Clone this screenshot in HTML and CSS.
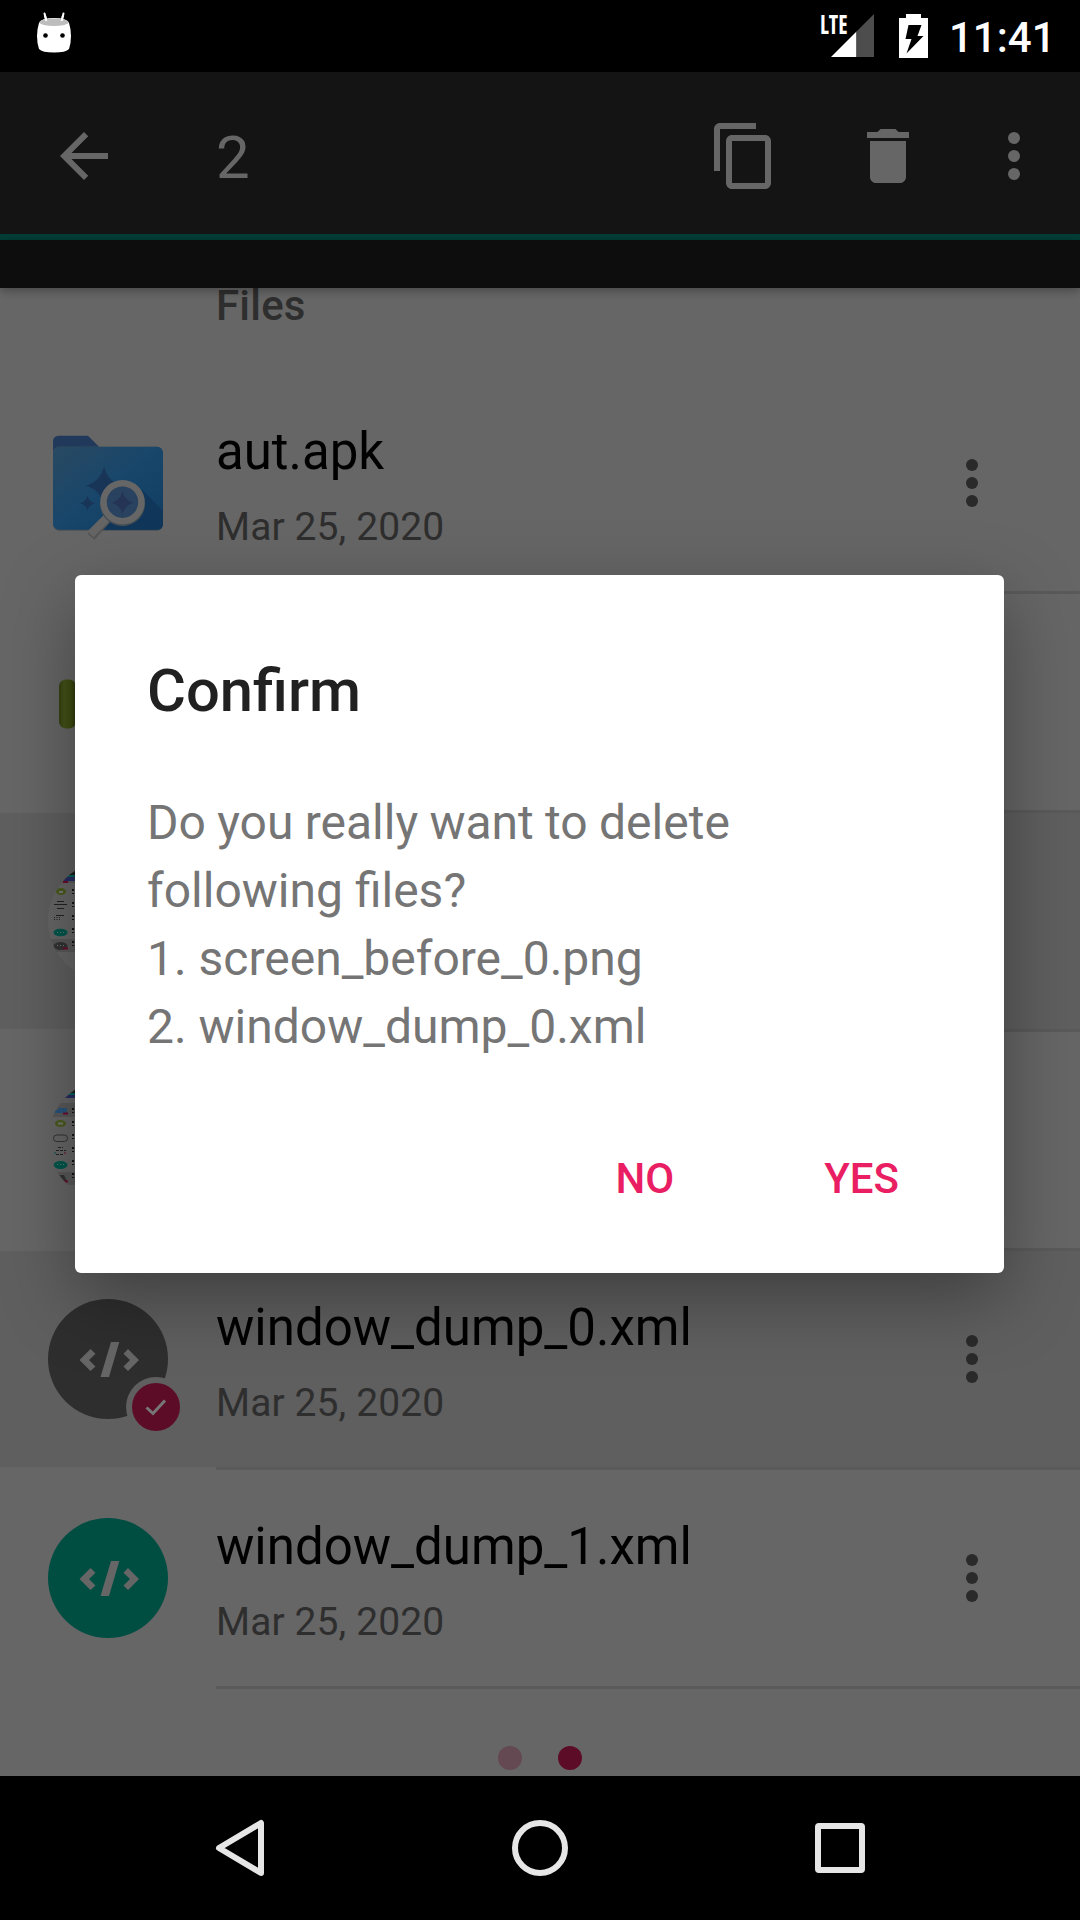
FILE: index.html
```html
<!DOCTYPE html>
<html lang="en">
<head>
<meta charset="utf-8">
<title>Files</title>
<link rel="stylesheet" href="styles.css">
</head>
<body>
<svg class="defs" width="0" height="0">
  <symbol id="more" viewBox="0 0 72 72"><circle cx="36" cy="18" r="6"/><circle cx="36" cy="36" r="6"/><circle cx="36" cy="54" r="6"/></symbol>
  <symbol id="code" viewBox="0 0 120 120"><circle cx="60" cy="60" r="60"/><path fill="#666" d="M42.5 50 47.500 54.700 41 61 47.500 67.500 42.500 72 31.500 61ZM63 43H71.300L61 78H52.500ZM80 50 91 61 80 72 75.500 67.500 82 61 75.500 54.700Z"/></symbol>
</svg>
<div class="phone">
  <header class="status">
    <svg class="status-left" width="34" height="42" viewBox="0 0 34 42"><path d="M7.500 1.500 9.500 9M26.500 1.500 24.500 9" stroke="#fff" stroke-width="2" stroke-linecap="round"/><path d="M2 11Q4 6 17 6T32 11Q34 17 34 24T32 37Q29 40.500 17 40.500T2 37Q0 31 0 24T2 11Z" fill="#fff"/><ellipse cx="17" cy="10.300" rx="14.500" ry="3.700" fill="#bdbdbd"/><circle cx="8.500" cy="23.500" r="2.300"/><circle cx="25.500" cy="23.500" r="2.300"/><path d="M7.800 3 9.400 9M26.200 3 24.600 9" stroke="#fff" stroke-width="2"/></svg>
    <div class="status-right">
      <div class="signal"><span class="lte">LTE</span><svg width="43" height="43" viewBox="0 0 43 43"><path fill="#fff" d="M0 43 25.500 17.500V43Z"/><path fill="#4d4d4d" d="M25.500 17.500 43 0V43H25.500Z"/></svg></div>
      <svg class="battery" width="29" height="44" viewBox="0 0 29 44"><path fill="#fff" d="M7 0H22V4H29V44H0V4H7Z"/><path d="M9.500 11H22.500L18.500 22H24.500L7.500 39.500 12.500 25H6.500Z"/></svg>
      <span class="clock">11:41</span>
    </div>
  </header>
  <div class="toolbar">
    <svg class="back" width="72" height="72" viewBox="0 0 24 24"><path d="M20 11H7.830l5.590-5.590L12 4l-8 8 8 8 1.410-1.410L7.830 13H20v-2z"/></svg>
    <span class="count">2</span>
    <svg class="copy" width="72" height="72" viewBox="0 0 24 24"><path d="M16 1H4c-1.100 0-2 .9-2 2v14h2V3h12V1zm3 4H8c-1.100 0-2 .9-2 2v14c0 1.100.9 2 2 2h11c1.100 0 2-.9 2-2V7c0-1.100-.9-2-2-2zm0 16H8V7h11v14z"/></svg>
    <svg class="trash" width="72" height="72" viewBox="0 0 24 24"><path d="M6 19c0 1.100.9 2 2 2h8c1.100 0 2-.9 2-2V7H6v12zM19 4h-3.500l-1-1h-5l-1 1H5v2h14V4z"/></svg>
    <svg class="menu" width="72" height="72"><use href="#more"/></svg>
  </div>
  <div class="strip"></div>
  <main class="list">
    <div class="section">Files</div>
    <div class="row">
      <svg class="icon" width="120" height="120" viewBox="0 -4.700 120 120">
        <defs><linearGradient id="fold" x1="0" y1="0" x2="1" y2="1"><stop offset="0" stop-color="#294961"/><stop offset=".5" stop-color="#18466b"/><stop offset="1" stop-color="#103c60"/></linearGradient></defs>
        <path fill="#213a5b" d="M5 14Q5 8 11 8H40L52 20V40H5Z"/>
        <rect x="5" y="19" width="110" height="84" rx="6" fill="#4f5355"/><rect x="5" y="19" width="110" height="83" rx="6" fill="url(#fold)"/>
        <path fill="#10365a" d="M94 62 115 83V96Q115 102 109 102H54L62 90Z"/>
        <path fill="#183557" d="M56 39Q60 54 74 58 60 62 56 77 52 62 38 58 52 54 56 39ZM39.500 68Q41 74 47 75.500 41 77 39.500 83 38 77 32 75.500 38 74 39.500 68Z"/>
        <path d="M61 89 43 109" stroke="#555" stroke-width="9"/>
        <path d="M61 88 42.500 106.500" stroke="#656565" stroke-width="8.500"/>
        <circle cx="74.500" cy="76" r="19" fill="#263f5d" stroke="#414c55" stroke-width="7"/>
        <circle cx="74.500" cy="74.500" r="19" fill="#28425f" stroke="#666" stroke-width="6.500"/>
        <path fill="#253455" d="M74.500 64Q77 72.500 85 75 77 77.500 74.500 86 72 77.500 64 75 72 72.500 74.500 64Z"/>
      </svg>
      <div class="label"><b>aut.apk</b><i>Mar 25, 2020</i></div>
      <svg class="more" width="72" height="72"><use href="#more"/></svg>
    </div>
    <div class="row">
      <svg class="icon" width="120" height="120" viewBox="0 0 120 120"><defs><linearGradient id="pill"><stop offset="0" stop-color="#34400f"/><stop offset=".3" stop-color="#455419"/><stop offset=".7" stop-color="#3d4c10"/><stop offset="1" stop-color="#2a360c"/></linearGradient></defs><rect x="11" y="37.500" width="17" height="49" rx="7" fill="url(#pill)"/></svg>
    </div>
    <div class="row selected">
      <svg class="icon" width="120" height="120" viewBox="0 0 120 120">
        <clipPath id="round"><circle cx="60" cy="60" r="60"/></clipPath>
        <g clip-path="url(#round)">
          <rect width="120" height="120" fill="#666"/><path fill="#595959" d="M0 0H60V22H0ZM0 78H60V91H0Z"/>
          <path fill="#1c1c1c" d="M0 0H60V14H0Z"/><path fill="#006055" d="M0 14H60V16H0Z"/><path fill="#262d60" d="M0 16H60V20H0Z"/><path fill="#6d0c30" d="M15 20H20V22H15Z"/>
          <ellipse cx="13" cy="30.500" rx="5" ry="3.500" fill="#4a5a1c"/><path stroke="#777" stroke-width="2" d="M11 31H15"/>
          <rect x="5.500" y="41" width="14" height="6.500" rx="3.200" fill="#666"/><path stroke="#222" d="M9 40.500H16M6 43.500H19M9 47.500H16"/>
          <path stroke="#222" d="M8 54.500H16"/><path stroke="#222" stroke-dasharray="1 1.500" d="M6 56.500H12M6 58.500H12"/>
          <ellipse cx="12.500" cy="71.500" rx="7" ry="3.800" fill="#00574c"/><path stroke="#5a7773" stroke-dasharray="1 2" d="M9 71.500H17"/>
          <ellipse cx="12.500" cy="85" rx="7" ry="4" fill="#333"/><path stroke="#777" stroke-dasharray="1 2" d="M9 84.500H17"/><path stroke="#6d0c30" stroke-width="2" d="M15 87.500H20"/>
          <path stroke="#111" stroke-dasharray="2 2 1 8" stroke-width="2" d="M25 28V91"/>
        </g>
      </svg>
    </div>
    <div class="row">
      <svg class="icon" width="120" height="120" viewBox="0 0 120 120">
        <g clip-path="url(#round)">
          <rect width="120" height="120" fill="#666"/><path fill="#595959" d="M0 23H60V37H0ZM0 92H60V105H0Z"/>
          <path fill="#1c1c1c" d="M0 0H60V13H0Z"/><path fill="#006055" d="M0 13H60V15H0Z"/><path fill="#262d60" d="M0 15H60V18H0Z"/>
          <path fill="#28547c" d="M10 28H19V33H7V30H10Z"/><path stroke="#6d0c30" stroke-width="2" d="M15 33.500H20"/>
          <ellipse cx="12.500" cy="43.500" rx="5.500" ry="3.500" fill="#4a5a1c"/><path stroke="#777" stroke-width="2" d="M10 43.500H15"/>
          <rect x="5.500" y="55" width="14" height="6.500" rx="3.200" fill="#666" stroke="#333"/>
          <path stroke="#222" stroke-dasharray="3 1" d="M10 67.500H15M8 70.500H18M8 74.500H16"/><path stroke="#00574c" d="M6 73H8"/><path stroke="#6d0c30" d="M16 73H18"/>
          <ellipse cx="12.500" cy="85" rx="7" ry="4" fill="#00574c"/><path stroke="#5a7773" stroke-dasharray="1 2" d="M9 84.500H17"/>
          <path fill="#333" d="M11 95H16L19 101H14Z"/><path stroke="#6d0c30" stroke-width="2" d="M16 101.500H20"/>
          <path stroke="#111" stroke-dasharray="2 2 1 8" stroke-width="2" d="M25 28V104"/>
        </g>
      </svg>
    </div>
    <div class="row selected">
      <div class="icon"><svg width="120" height="120" fill="#2e2e2e"><use href="#code"/></svg>
        <svg class="check" width="60" height="60" viewBox="0 0 60 60"><circle cx="30" cy="30" r="30" fill="#5f5f5f"/><circle cx="30" cy="30" r="24" fill="#5d0c28"/><path d="M20.500 30.500 27 36.500 39 23.500" fill="none" stroke="#777" stroke-width="3"/></svg></div>
      <div class="label"><b>window_dump_0.xml</b><i>Mar 25, 2020</i></div>
      <svg class="more" width="72" height="72"><use href="#more"/></svg>
    </div>
    <div class="row">
      <svg class="icon" width="120" height="120" fill="#004d42"><use href="#code"/></svg>
      <div class="label"><b>window_dump_1.xml</b><i>Mar 25, 2020</i></div>
      <svg class="more" width="72" height="72"><use href="#more"/></svg>
    </div>
    <div class="pager"><span></span><span class="on"></span></div>
  </main>
  <nav class="nav">
    <svg width="720" height="144" viewBox="180 1776 720 144" fill="none" stroke="#e6e6e6" stroke-width="6" stroke-linejoin="round"><path d="M219 1848 261 1823V1873Z"/><circle cx="540" cy="1848" r="25"/><rect x="818" y="1826" width="44" height="44" rx="1"/></svg>
  </nav>
  <section class="dialog" role="dialog">
    <h1>Confirm</h1>
    <p><span class="question">Do you really want to delete</span><br>following files?<br>1. screen_before_0.png<br>2. window_dump_0.xml</p>
    <div class="actions"><button>NO</button><button>YES</button></div>
  </section>
</div>
</body>
</html>
```
FILE: styles.css
```css
* { box-sizing: border-box; }
body { margin: 0; font-family: Roboto, sans-serif; background: #000; }
.defs { position: absolute; }
.phone { position: relative; width: 1080px; height: 1920px; overflow: hidden; display: flex; flex-direction: column; }
svg { display: block; flex: none; }
.status { height: 72px; flex: none; display: flex; justify-content: space-between; padding: 0 28px 0 37px; color: #fff; }
.status-left { margin-top: 12px; }
.status-right { display: flex; }
.signal { display: flex; margin-top: 14px; }
.lte { width: 11px; font: 700 26px/20px "Open Sans", sans-serif; font-stretch: condensed; white-space: nowrap; transform: scaleX(.84); transform-origin: left; }
.battery { margin: 14px 0 0 25px; }
.clock { width: 103px; margin-left: 21px; font-weight: 500; font-size: 42px; line-height: 76px; white-space: nowrap; }
.toolbar { height: 168px; flex: none; display: flex; align-items: flex-start; padding: 48px 30px 0 48px; background: #141414; border-bottom: 6px solid #003d36; fill: #666; }
.count { margin-left: 96px; color: #666; font-size: 60px; line-height: 76px; }
.copy { margin-left: auto; }
.trash { margin-left: 72px; }
.menu { margin-left: 54px; }
.strip { height: 48px; flex: none; background: #0d0d0d; box-shadow: 0 3px 9px rgba(0, 0, 0, .3); position: relative; }
.list { height: 1488px; flex: none; background: #666; overflow: hidden; }
.section { height: 87px; padding-left: 216px; font-weight: 500; font-size: 42px; line-height: 35px; letter-spacing: .2px; color: #2e2e2e; }
.row { height: 219px; display: flex; align-items: center; padding: 0 72px 3px 48px; background: linear-gradient(#5a5a5a, #5a5a5a) 216px 216px / 864px 3px no-repeat #666; }
.selected { background: linear-gradient(#5a5a5a, #5a5a5a) 216px 216px / 864px 3px no-repeat, linear-gradient(#5f5f5f 216px, #666 216px); }
.icon { position: relative; width: 120px; height: 120px; }
.check { position: absolute; left: 78px; top: 78px; }
.label { margin-left: 48px; padding-top: 6px; display: flex; flex-direction: column; }
.label b { font-weight: 400; font-size: 51px; line-height: 60px; color: #000; }
.label i { font-style: normal; font-size: 39px; line-height: 46px; margin-top: 22px; letter-spacing: .1px; color: #2e2e2e; }
.more { margin-left: auto; fill: #2a2a2a; }
.pager { display: flex; justify-content: center; gap: 36px; padding-top: 57px; }
.pager span { width: 24px; height: 24px; border-radius: 50%; background: #644852; }
.pager .on { background: #5d0c28; }
.nav { height: 144px; display: flex; justify-content: center; }
.dialog { position: absolute; left: 75px; top: 575px; width: 929px; height: 698px; border-radius: 6px; background: #fff; padding: 80px 72px 0; box-shadow: 0 24px 72px rgba(0, 0, 0, .35); }
h1 { margin: 0; font-weight: 500; font-size: 59.7px; line-height: 72px; color: #212121; }
.dialog p { margin: 62px 0 0; font-size: 48px; line-height: 68px; color: #757575; }
.question { word-spacing: -.6px; }
.actions { display: flex; justify-content: flex-end; padding: 93px 9px 0 0; }
button { border: 0; background: none; padding: 0 24px; margin-left: 102px; font: 500 42px/50px Roboto, sans-serif; color: #e91e63; }
```
